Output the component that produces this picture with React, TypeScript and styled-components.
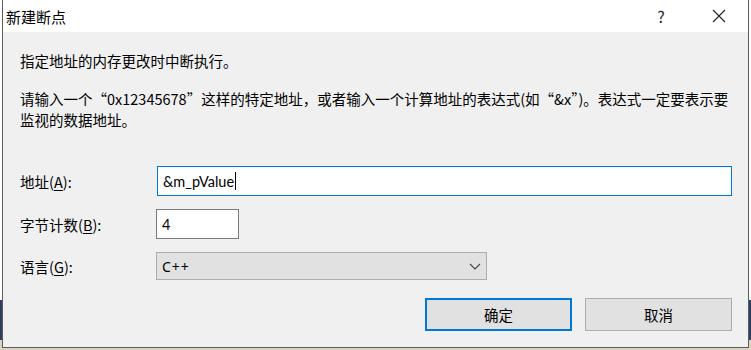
import styled, { createGlobalStyle } from 'styled-components';

const GlobalStyle = createGlobalStyle`
    html, body {
        margin: 0;
        padding: 0;
        background: #d9d3c4;
    }
    body {
        font-family: "Noto Sans", "Noto Sans CJK SC", sans-serif;
        color: #000;
    }
`;

const Screen = styled.div`
    width: 751px;
    height: 350px;
    padding-left: 2px;
    box-sizing: border-box;
    background: linear-gradient(#ffffff 0 300px, #2c3e63 300px 340px, #d9d3c4 340px);
    overflow: hidden;
`;

const Dialog = styled.div`
    width: 747px;
    height: 348px;
    box-sizing: border-box;
    border: 1px solid #5c5c5c;
    border-top: none;
    background: #f0f0f0;
    display: flex;
    flex-direction: column;
`;

const TitleBar = styled.div`
    height: 32px;
    background: #ffffff;
    display: flex;
    align-items: center;
    padding-left: 3px;
    font-family: "Noto Sans CJK SC", sans-serif;
    font-size: 15px;
`;

const Title = styled.div`
    flex: 1;
`;

const TitleButton = styled.div`
    width: 58px;
    height: 32px;
    display: flex;
    align-items: center;
    justify-content: center;
    font-size: 16px;
    color: #222;
`;

const Body = styled.div`
    flex: 1;
    padding: 18px 16px 0 17px;
    display: flex;
    flex-direction: column;
    font-family: "Noto Sans CJK SC", sans-serif;
    font-size: 14.5px;
`;

const Paragraph = styled.p<{ $gap?: number }>`
    margin: 0;
    margin-top: ${p => p.$gap ?? 0}px;
    line-height: 21px;
    white-space: nowrap;
`;

const FormGrid = styled.div`
    margin-top: 36px;
    display: grid;
    grid-template-columns: 136px 1fr;
    grid-auto-rows: auto;
    row-gap: 13px;
    align-items: center;
`;

const Label = styled.label`
    font-size: 14.5px;
    u {
        text-decoration: underline;
        text-underline-offset: 2px;
    }
`;

const TextBox = styled.div<{ $width?: number; $focused?: boolean }>`
    width: ${p => (p.$width ? `${p.$width}px` : 'auto')};
    height: 30px;
    box-sizing: border-box;
    background: #fff;
    border: 1px solid ${p => (p.$focused ? '#0078d7' : '#7a7a7a')};
    margin-left: ${p => (p.$focused ? 1 : 0)}px;
    display: flex;
    align-items: center;
    padding-left: 5px;
    font-family: "Lato", "Noto Sans", sans-serif;
    font-size: 14.5px;
`;

const Caret = styled.span`
    display: inline-block;
    width: 1px;
    height: 18px;
    background: #000;
    margin-left: 1px;
`;

const Select = styled.div`
    width: 331px;
    height: 28px;
    box-sizing: border-box;
    background: #e1e1e1;
    border: 1px solid #adadad;
    display: flex;
    align-items: center;
    justify-content: space-between;
    padding: 0 5px 0 5px;
    font-family: "Noto Sans", sans-serif;
    font-size: 14px;
    letter-spacing: 1px;
`;

const Buttons = styled.div`
    margin-top: 18px;
    display: flex;
    justify-content: flex-end;
    gap: 13px;
`;

const Button = styled.button<{ $primary?: boolean }>`
    width: 147px;
    height: 33px;
    box-sizing: border-box;
    background: #e1e1e1;
    border: ${p => (p.$primary ? '2px solid #0078d7' : '1px solid #adadad')};
    font-family: "Noto Sans CJK SC", sans-serif;
    font-size: 14.5px;
    color: #000;
    padding: 0;
`;

export default function App() {
    return (
        <>
            <GlobalStyle />
            <Screen>
                <Dialog>
                    <TitleBar>
                        <Title>新建断点</Title>
                        <TitleButton>?</TitleButton>
                        <TitleButton>
                            <svg width="14" height="14" viewBox="0 0 14 14">
                                <path d="M1 1L13 13M13 1L1 13" stroke="#222" strokeWidth="1.1" />
                            </svg>
                        </TitleButton>
                    </TitleBar>
                    <Body>
                        <Paragraph>指定地址的内存更改时中断执行。</Paragraph>
                        <Paragraph $gap={17}>
                            请输入一个“0x12345678”这样的特定地址，或者输入一个计算地址的表达式(如“&x”)。表达式一定要表示要
                            <br />
                            监视的数据地址。
                        </Paragraph>
                        <FormGrid>
                            <Label>地址(<u>A</u>):</Label>
                            <TextBox $focused>
                                &amp;m_pValue<Caret />
                            </TextBox>
                            <Label>字节计数(<u>B</u>):</Label>
                            <TextBox $width={83}>4</TextBox>
                            <Label>语言(<u>G</u>):</Label>
                            <Select>
                                <span>C++</span>
                                <svg width="12" height="7" viewBox="0 0 12 7">
                                    <path d="M1 1L6 6L11 1" stroke="#444" strokeWidth="1.1" fill="none" />
                                </svg>
                            </Select>
                        </FormGrid>
                        <Buttons>
                            <Button $primary>确定</Button>
                            <Button>取消</Button>
                        </Buttons>
                    </Body>
                </Dialog>
            </Screen>
        </>
    );
}
